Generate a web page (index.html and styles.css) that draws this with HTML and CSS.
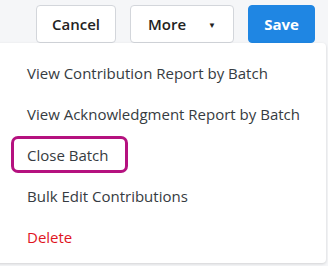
FILE: index.html
```html
<!DOCTYPE html>
<html>
<head>
<meta charset="utf-8">
<link rel="stylesheet" href="styles.css">
</head>
<body>
<div class="page">
  <div class="toolbar">
    <button class="btn">Cancel</button>
    <button class="btn btn-more">More <span class="caret">▼</span></button>
    <button class="btn btn-primary">Save</button>
  </div>
  <ul class="menu">
    <li class="item">View Contribution Report by Batch</li>
    <li class="item">View Acknowledgment Report by Batch</li>
    <li class="item"><span class="highlight">Close Batch</span></li>
    <li class="item">Bulk Edit Contributions</li>
    <li class="item danger">Delete</li>
  </ul>
</div>
</body>
</html>
```

FILE: styles.css
```css
html, body {
  margin: 0;
  padding: 0;
  background: #f5f6f8;
  font-family: "Open Sans", "Noto Sans", sans-serif;
}
.page {
  position: relative;
  width: 328px;
  height: 266px;
  overflow: hidden;
}
.toolbar {
  display: flex;
  justify-content: flex-end;
  gap: 14px;
  padding: 5px 13px 0 0;
}
.btn {
  height: 38px;
  border: 1px solid #d3d6db;
  border-radius: 4px;
  background: #fff;
  color: #222;
  font-family: inherit;
  font-size: 15px;
  font-weight: 600;
  padding: 0;
  width: 80px;
}
.btn-more {
  width: 104px;
  text-align: left;
  padding-left: 17px;
}
.caret {
  font-size: 8px;
  margin-left: 18px;
  vertical-align: 2px;
}
.btn-primary {
  width: 67px;
  background: #1f86e3;
  border-color: #1f86e3;
  color: #fff;
  font-weight: 700;
}
.menu {
  position: absolute;
  left: -10px;
  right: 2px;
  top: 43px;
  bottom: 3px;
  margin: 0;
  padding: 10px 0 0 0;
  list-style: none;
  background: #fff;
  border-radius: 4px;
  box-shadow: 0 1px 3px rgba(0,0,0,0.15);
}
.item {
  height: 41px;
  line-height: 41px;
  padding-left: 37px;
  font-size: 15px;
  color: #363b41;
  white-space: nowrap;
}
.danger {
  color: #e0141e;
}
.highlight {
  position: relative;
  display: inline-block;
  line-height: 20px;
}
.highlight::after {
  content: "";
  position: absolute;
  left: -16px;
  right: -20px;
  top: -9px;
  bottom: -8px;
  border: 3px solid #b5117f;
  border-radius: 7px;
}
```
